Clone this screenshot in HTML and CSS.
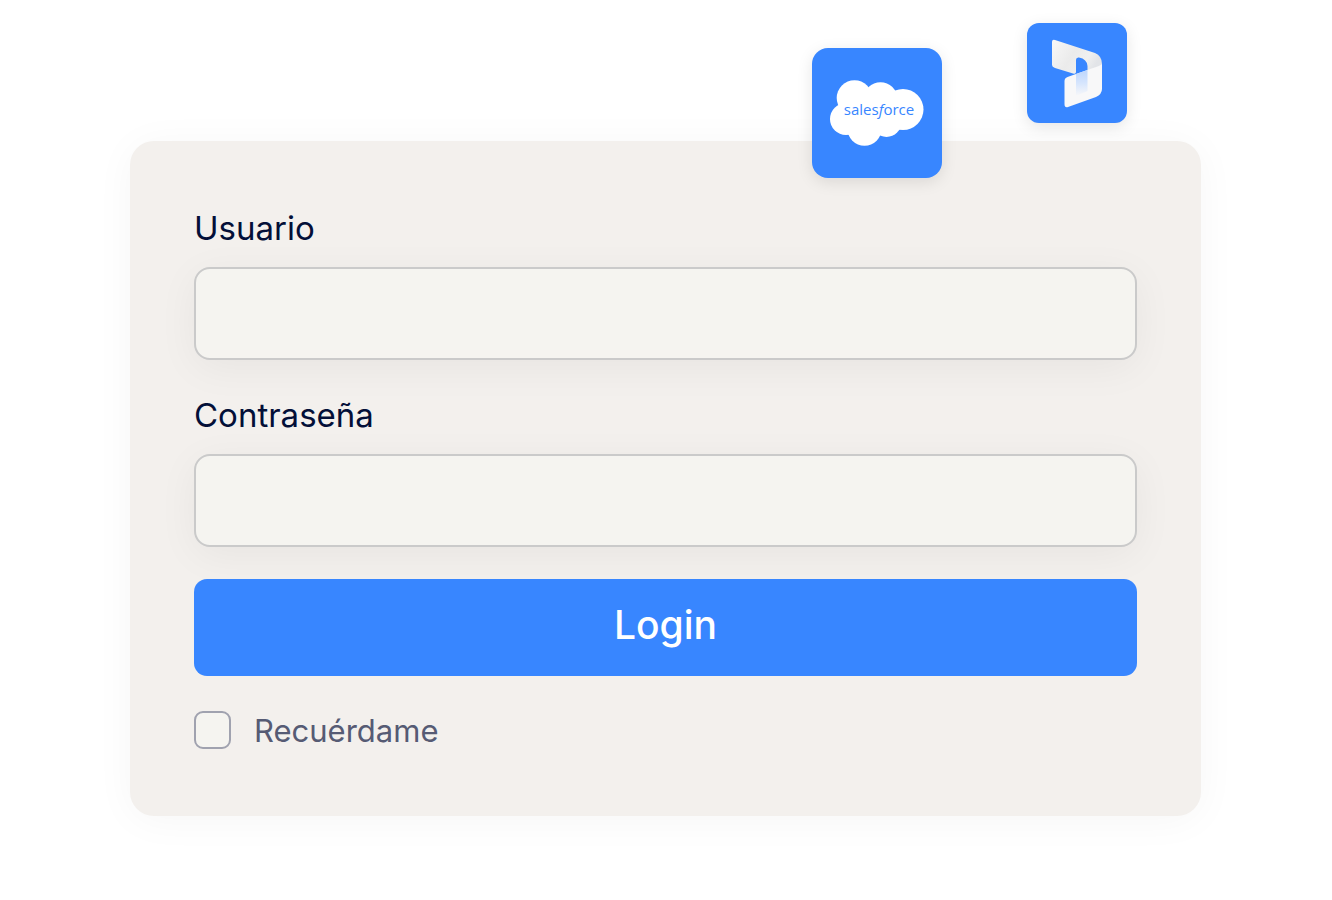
FILE: index.html
```
<!DOCTYPE html>
<html lang="es">
<head>
  <meta charset="UTF-8" />
  <meta name="viewport" content="width=device-width, initial-scale=1.0" />
  <title>Login</title>
  <link rel="stylesheet" href="styles.css">
</head>
<body>
  <main class="login-card">
    <div class="tile tile-salesforce">
      <svg viewBox="0 0 130 130" role="img" aria-label="salesforce">
        <g fill="#fff">
          <circle cx="42.500" cy="50" r="17.800" />
          <circle cx="68.500" cy="51" r="16.800" />
          <circle cx="91" cy="61.500" r="20.500" />
          <circle cx="34" cy="71" r="16" />
          <circle cx="52.500" cy="80.500" r="17.200" />
          <circle cx="74.500" cy="74" r="15" />
          <path d="M32 55L45 45L70 46L92 55L88 80L70 82L40 82Z" />
        </g>
        <text class="brand" x="67" y="67" text-anchor="middle">sales<tspan font-style="italic">f</tspan>orce</text>
      </svg>
    </div>
    <div class="tile tile-dynamics">
      <svg viewBox="0 0 100 100" aria-hidden="true">
        <defs>
          <linearGradient id="band" x1="0" y1="0" x2="1" y2="0.4">
            <stop offset="0" stop-color="#f8f8f8" />
            <stop offset="0.5" stop-color="#ebebeb" />
            <stop offset="0.8" stop-color="#f0f0f0" />
            <stop offset="1" stop-color="#e2e4e8" />
          </linearGradient>
          <linearGradient id="fold" x1="0" y1="0" x2="0" y2="1">
            <stop offset="0" stop-color="#bdd6fd" />
            <stop offset="0.5" stop-color="#d6e5fd" />
            <stop offset="1" stop-color="#f8f8f9" />
          </linearGradient>
        </defs>
        <path fill="url(#band)" d="M25 19Q25 16 28 17L68 30Q75 33 75 41Q75 45 70 47L60.500 51V43Q60 36 52 34.500Q49 34 49 37V49Q49 51.500 46 50.500L28 45Q25 44 25 42Z" />
        <path fill="#f8f8f9" d="M75 41V66Q75 71 69 74L41 84Q37.500 85 37.500 81V58Q37.500 55 40.500 54L66 45Q73 43 75 41Z" />
        <path fill="url(#fold)" d="M49 51L60.500 47V68L49 73Z" />
      </svg>
    </div>

    <form class="login-form">
      <div class="field">
        <label for="user">Usuario</label>
        <input type="text" id="user" name="user">
      </div>
      <div class="field">
        <label for="password">Contraseña</label>
        <input type="password" id="password" name="password">
      </div>
      <button type="button" class="login-button">Login</button>
      <div class="remember">
        <input type="checkbox" id="remember" name="remember">
        <label for="remember">Recuérdame</label>
      </div>
    </form>
  </main>
</body>
</html>
```
FILE: styles.css
```
* {
  box-sizing: border-box;
}

body {
  margin: 0;
  padding: 141px 131px 84px 130px;
  font-family: Inter, "Liberation Sans", sans-serif;
  background-color: #fff;
  color: #030f38;
}

.login-card {
  position: relative;
  padding: 64px 64px 67px;
  background-color: #f3f0ed;
  border-radius: 24px;
  box-shadow: 0 4px 40px rgba(0, 0, 0, 0.04);
}

.login-form {
  display: flex;
  flex-direction: column;
  gap: 32px;
}

.field {
  display: flex;
  flex-direction: column;
  gap: 16px;
}

.field label {
  font-size: 33px;
  line-height: 46px;
}

.field input {
  width: 100%;
  height: 93px;
  padding: 0 24px;
  font: inherit;
  font-size: 31px;
  color: inherit;
  background-color: #f5f4f0;
  border: 2px solid #cacaca;
  border-radius: 16px;
  box-shadow: 0 8px 40px rgba(0, 0, 0, 0.05);
}

.login-button {
  height: 97px;
  padding: 0 24px 6px;
  font: inherit;
  font-size: 39px;
  font-weight: 500;
  color: #fff;
  background-color: #3886ff;
  border: none;
  border-radius: 13px;
  cursor: pointer;
}

.remember {
  display: flex;
  align-items: center;
  gap: 23px;
  padding-top: 3px;
}

.remember input {
  appearance: none;
  width: 37px;
  height: 38px;
  margin: 0;
  background-color: #f5f4f0;
  border: 2px solid #a0a2af;
  border-radius: 9px;
}

.remember input:checked {
  background-color: #3886ff;
}

.remember label {
  padding-top: 2px;
  font-size: 31px;
  line-height: 36px;
  color: #565b74;
}

/* app tiles over the card's top edge */
.tile {
  position: absolute;
  background-color: #3886ff;
  box-shadow: 0 4px 16px rgba(0, 0, 0, 0.1);
}

.tile svg {
  display: block;
  width: 100%;
}

.tile-salesforce {
  top: -93px;
  right: 259px;
  width: 130px;
  border-radius: 16px;
}

.tile-dynamics {
  top: -118px;
  right: 74px;
  width: 100px;
  border-radius: 12px;
}

.brand {
  font-family: "Open Sans", "Noto Sans", sans-serif;
  font-size: 15px;
  font-weight: 500;
  fill: #3886ff;
}
```
